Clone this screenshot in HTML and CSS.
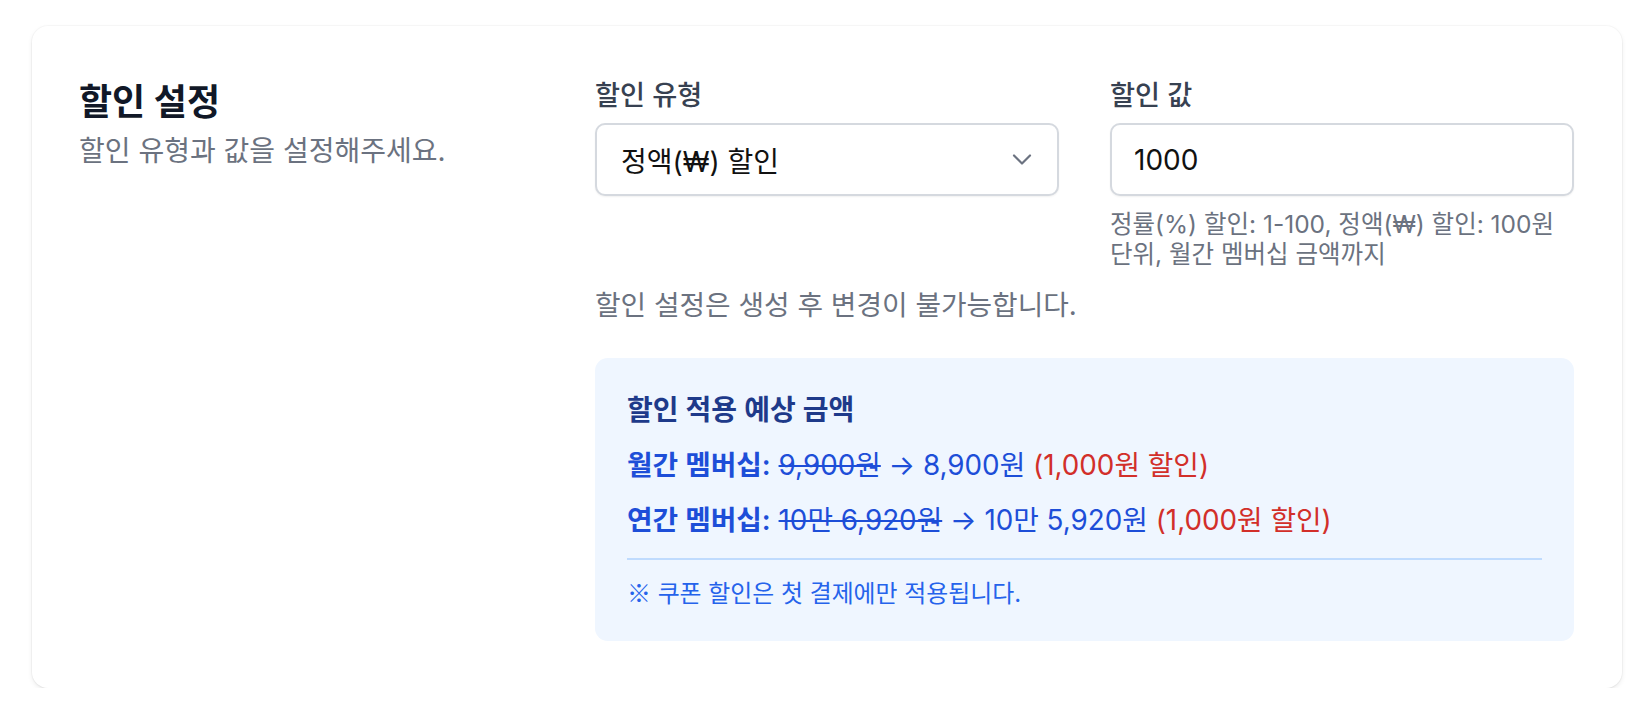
FILE: index.html
```html
<!DOCTYPE html>
<html lang="ko">
<head>
<meta charset="utf-8">
<title>할인 설정</title>
<link rel="stylesheet" href="styles.css">
</head>
<body>
<section class="card">
  <div class="intro">
    <h2 class="title">할인 설정</h2>
    <p class="subtitle">할인 유형과 값을 설정해주세요.</p>
  </div>
  <div class="settings">
    <div class="fields">
      <div class="field">
        <label class="label">할인 유형</label>
        <div class="control select">
          <span>정액(₩) 할인</span>
          <svg class="chevron" width="20" height="11" viewBox="0 0 20 11"><polyline points="2,1.5 10,9.5 18,1.5" fill="none" stroke="#6b7280" stroke-width="2.2" stroke-linecap="round" stroke-linejoin="round"/></svg>
        </div>
      </div>
      <div class="field">
        <label class="label">할인 값</label>
        <div class="control input"><span>1000</span></div>
        <p class="helper">정률(%) 할인: 1-100, 정액(₩) 할인: 100원 단위, 월간 멤버십 금액까지</p>
      </div>
    </div>
    <p class="notice">할인 설정은 생성 후 변경이 불가능합니다.</p>
    <div class="preview">
      <h3 class="preview-title">할인 적용 예상 금액</h3>
      <p class="row"><strong>월간 멤버십:</strong> <s>9,900원</s> → 8,900원 <span class="off">(1,000원 할인)</span></p>
      <p class="row row2"><strong>연간 멤버십:</strong> <s>10만 6,920원</s> → 10만 5,920원 <span class="off">(1,000원 할인)</span></p>
      <p class="foot"><span class="mark">※</span> 쿠폰 할인은 첫 결제에만 적용됩니다.</p>
    </div>
  </div>
</section>
</body>
</html>
```

FILE: styles.css
```css
* { box-sizing: border-box; }
html, body { margin: 0; background: #ffffff; }
body {
  padding: 26px 22px 0 32px;
  font-family: Inter, "Noto Sans CJK KR", sans-serif;
  color: #111827;
}
.card {
  background: #ffffff;
  border-radius: 16px;
  padding: 51px 48px 47px 47px;
  box-shadow: 0 0 0 1px rgba(0,0,0,0.025), 0 2px 5px rgba(0,0,0,0.08), 0 1px 3px -1px rgba(0,0,0,0.06);
  display: grid;
  grid-template-columns: repeat(3, 1fr);
  column-gap: 53px;
}
.intro { grid-column: 1; }
.settings { grid-column: 2 / span 2; }
.title {
  margin: 0;
  font-size: 36px;
  line-height: 51.6px;
  font-weight: 700;
  color: #111827;
}
.subtitle {
  margin: 3.4px 0 0;
  font-size: 28px;
  line-height: 38.4px;
  color: #6b7280;
}
.fields {
  display: grid;
  grid-template-columns: 1fr 1fr;
  column-gap: 51px;
}
.label {
  display: block;
  font-size: 27.2px;
  line-height: 38.4px;
  font-weight: 500;
  color: #374151;
  margin-bottom: 7.8px;
}
.control {
  height: 73px;
  border: 2px solid #d5d9df;
  border-radius: 10px;
  background: #fff;
  box-shadow: 0 1px 2px rgba(0,0,0,0.06);
  display: flex;
  align-items: center;
  justify-content: space-between;
  padding: 0 25px 0 24px;
  font-size: 28px;
  color: #111111;
}
.input { padding-left: 22px; }
.chevron { display: block; }
.helper {
  margin: 12.8px 0 0;
  font-size: 24.5px;
  line-height: 30px;
  color: #6b7280;
}
.notice {
  margin: 17.3px 0 0;
  font-size: 27.8px;
  line-height: 38.4px;
  color: #6b7280;
}
.preview {
  margin-top: 33px;
  background: #eff6ff;
  border-radius: 12.8px;
  padding: 33px 32px 31px 32px;
}
.preview-title {
  margin: 0;
  font-size: 28px;
  line-height: 38.4px;
  font-weight: 600;
  color: #1e3a8a;
}
.row {
  margin: 17px 0 0;
  font-size: 27.8px;
  line-height: 38.4px;
  color: #1d4ed8;
}
.row2 { margin-top: 16.6px; }
.row strong { font-weight: 600; }
.row s { text-decoration-thickness: 2px; }
.off { color: #d22f2a; }
.foot {
  margin: 18px 0 0;
  padding-top: 16px;
  border-top: 2px solid #bfdbfe;
  font-size: 23.9px;
  line-height: 32px;
  color: #2563eb;
}
.mark { font-family: "Noto Sans CJK KR", sans-serif; }
```
